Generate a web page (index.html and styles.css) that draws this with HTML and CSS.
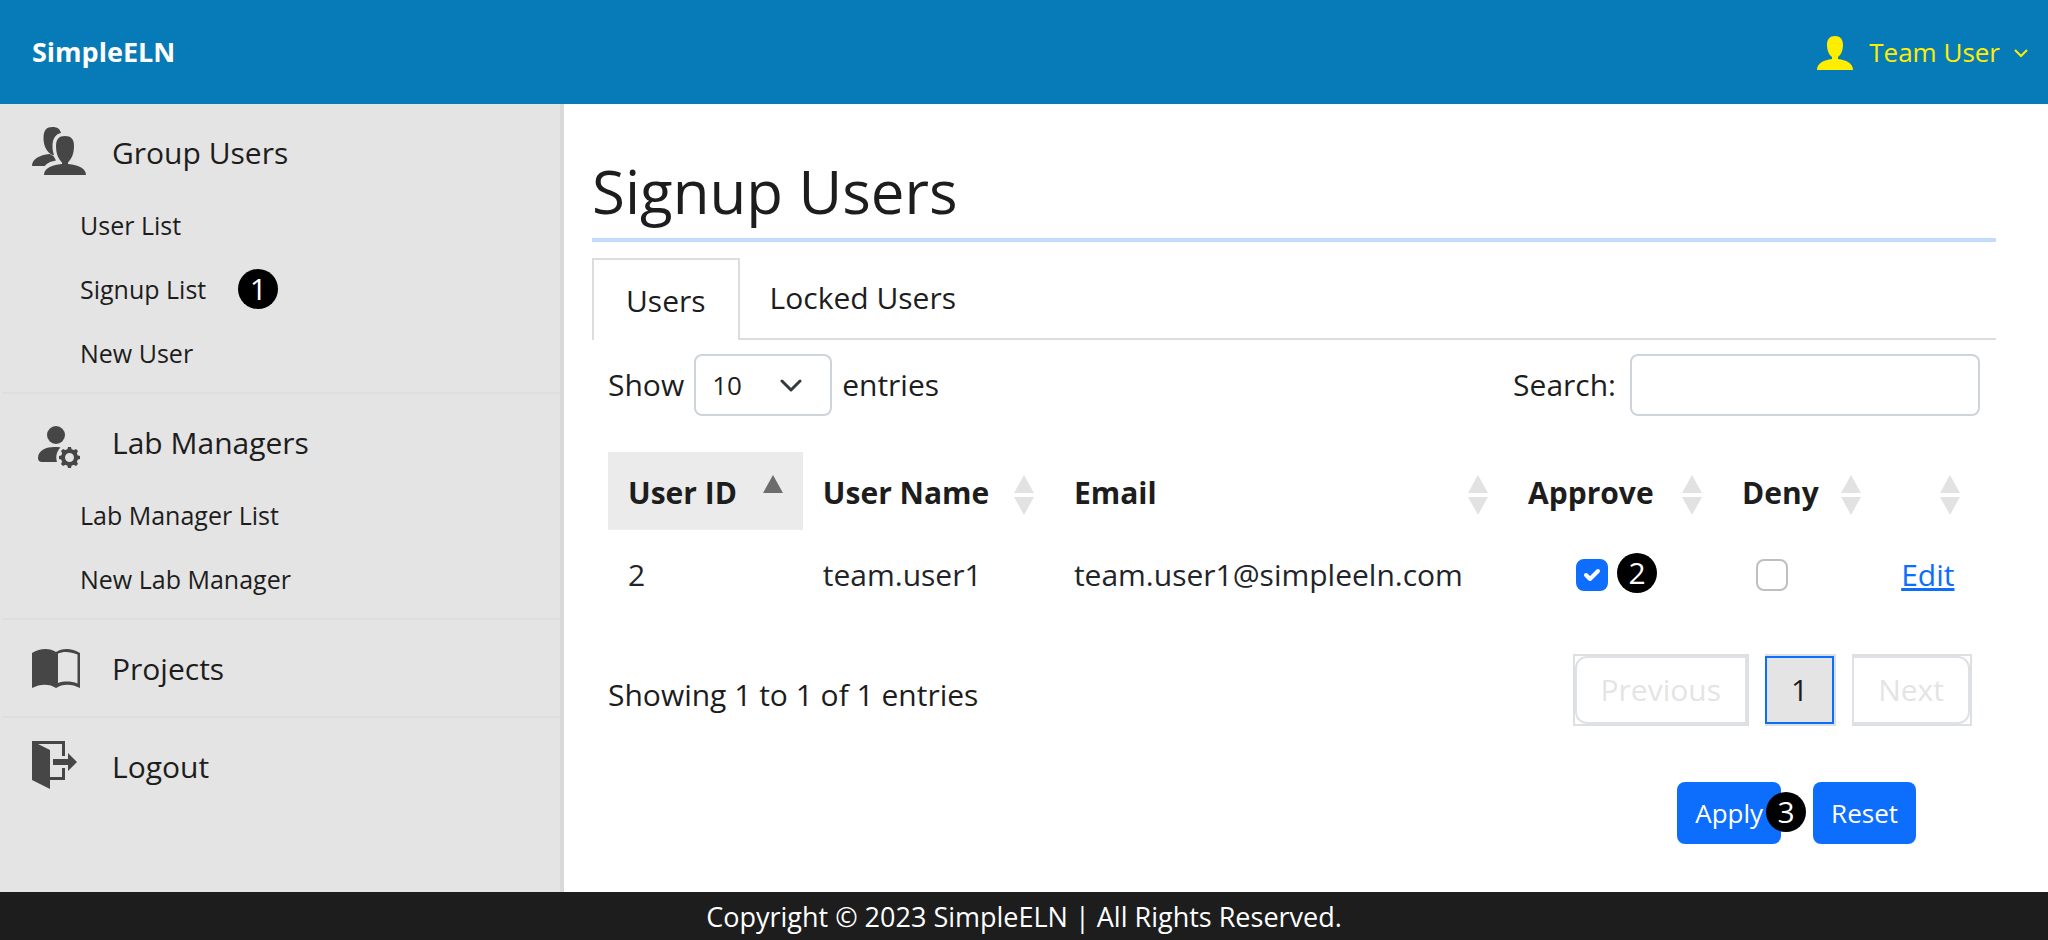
FILE: index.html
```html
<!DOCTYPE html>
<html lang="en">
<head>
<meta charset="utf-8">
<meta name="viewport" content="width=device-width, initial-scale=1">
<title>SimpleELN - Signup Users</title>
<link rel="stylesheet" href="styles.css">
</head>
<body class="page">
<header class="topbar">
  <a class="brand" href="#">SimpleELN</a>
  <button class="account" type="button">
    <svg class="account-avatar" viewBox="0 0 36 34" aria-hidden="true"><path d="M18 0c5 0 8 3 8 9 0 5-2 10-5 12v2c8 1 15 4 15 11H0c0-7 7-10 15-11v-2c-3-2-5-7-5-12 0-6 3-9 8-9z"/></svg>
    <span class="account-name">Team User</span>
    <svg class="account-caret" viewBox="0 0 14 10" aria-hidden="true"><path d="M1 2l6 6 6-6"/></svg>
  </button>
</header>
<div class="shell">
  <nav class="sidebar" aria-label="Main">
    <section class="nav-group">
      <a class="nav-head" href="#">
        <svg class="nav-icon" viewBox="0 0 56 56" aria-hidden="true"><path d="M20.500 2c5 0 7.500 2 8.500 6-5 1-8.500 5-8.500 13 0 4 .5 6 1.500 9-1 0-3-.5-4-1.500-4-3-6.500-8.500-6.500-15.500 0-8 3-11 9-11zM17.500 29l4 2 2.500 4.500C18 36.500 14.500 38.500 13 41H0c0-7 7.500-11 17.500-12z"/><path d="M33 11c6 0 9 3 9 10 0 8-2.500 13-6 16.500V39c11 1 18 4.500 18 11H12c0-6.500 7-10 18-11v-1.500c-3.500-3.500-6-8.500-6-16.500 0-7 3-10 9-10z"/></svg>
        <span>Group Users</span>
      </a>
      <ul class="nav-list">
        <li><a class="nav-link" href="#">User List</a></li>
        <li><a class="nav-link" href="#">Signup List</a><span class="step step-list">1</span></li>
        <li><a class="nav-link" href="#">New User</a></li>
      </ul>
    </section>
    <section class="nav-group">
      <a class="nav-head" href="#">
        <svg class="nav-icon" viewBox="0 0 56 56" aria-hidden="true"><circle cx="24" cy="20" r="9"/><path d="M10 47q-4 0-4-4c0-8 9-11 16-11 3 0 5 0 6.500.5-4 4-5 9-3.500 14.500z"/><circle class="gear-ring" cx="37.500" cy="42.500" r="6.500"/><path d="M36 32h3l1 4h-5zM36 53h3l1-4h-5zM27 41v3l4 1v-5zM48 41v3l-4 1v-5zM29 36l2-2 4 2-4 4zM46 36l-2-2-4 2 4 4zM29 49l2 2 4-2-4-4zM46 49l-2 2-4-2 4-4z"/></svg>
        <span>Lab Managers</span>
      </a>
      <ul class="nav-list">
        <li><a class="nav-link" href="#">Lab Manager List</a></li>
        <li><a class="nav-link" href="#">New Lab Manager</a></li>
      </ul>
    </section>
    <section class="nav-group">
      <a class="nav-head" href="#">
        <svg class="nav-icon" viewBox="0 0 56 56" aria-hidden="true"><path fill-rule="evenodd" d="M0 12c8-5 18-5 24-1 6-4 16-4 24 1v35c-8-4.500-18-4.500-24 0-6-4.500-16-4.500-24 0zM26 12.500v29.500c6-2 13-2 19.500.5v-29c-7-3-14-3.500-19.500-1z"/></svg>
        <span>Projects</span>
      </a>
    </section>
    <section class="nav-group">
      <a class="nav-head" href="#">
        <svg class="nav-icon" viewBox="0 0 56 56" aria-hidden="true"><path d="M0 2h33v15h-3V5H6l12 6v27h12v-9h3v12H18v9L0 41z"/><path d="M21 20h15v-6l9 9-9 9v-6H21z"/></svg>
        <span>Logout</span>
      </a>
    </section>
  </nav>
  <main class="content">
    <h1 class="title">Signup Users</h1>
    <div class="tabs" role="tablist">
      <button class="tab tab-active" type="button" role="tab" aria-selected="true">Users</button>
      <button class="tab" type="button" role="tab" aria-selected="false">Locked Users</button>
    </div>
    <div class="panel">
      <div class="toolbar">
        <label class="length">Show
          <span class="select-wrap">
            <select class="field select"><option>10</option><option>25</option><option>50</option></select>
            <svg class="select-caret" viewBox="0 0 22 14" aria-hidden="true"><path d="M2 2l9 9 9-9"/></svg>
          </span>
          entries</label>
        <label class="search">Search: <input class="field search-input" type="search"></label>
      </div>
      <table class="grid">
        <colgroup><col class="col-id"><col class="col-name"><col class="col-email"><col class="col-approve"><col class="col-deny"><col class="col-edit"></colgroup>
        <thead>
          <tr>
            <th class="sorted"><div class="th-in"><span>User ID</span><svg class="sort" viewBox="0 0 20 40" aria-hidden="true"><path d="M10 0l10 18H0z"/></svg></div></th>
            <th><div class="th-in"><span>User Name</span><svg class="sort" viewBox="0 0 20 40" aria-hidden="true"><path d="M10 0l10 18H0zM0 22h20L10 40z"/></svg></div></th>
            <th><div class="th-in"><span>Email</span><svg class="sort" viewBox="0 0 20 40" aria-hidden="true"><path d="M10 0l10 18H0zM0 22h20L10 40z"/></svg></div></th>
            <th><div class="th-in"><span>Approve</span><svg class="sort" viewBox="0 0 20 40" aria-hidden="true"><path d="M10 0l10 18H0zM0 22h20L10 40z"/></svg></div></th>
            <th><div class="th-in"><span>Deny</span><svg class="sort" viewBox="0 0 20 40" aria-hidden="true"><path d="M10 0l10 18H0zM0 22h20L10 40z"/></svg></div></th>
            <th><div class="th-in"><span></span><svg class="sort" viewBox="0 0 20 40" aria-hidden="true"><path d="M10 0l10 18H0zM0 22h20L10 40z"/></svg></div></th>
          </tr>
        </thead>
        <tbody>
          <tr>
            <td>2</td>
            <td>team.user1</td>
            <td>team.user1@simpleeln.com</td>
            <td class="cell-approve"><span class="check-wrap"><input class="check" type="checkbox" checked aria-label="Approve"><svg class="check-mark" viewBox="0 0 20 20" aria-hidden="true"><path d="M4 10l4 4 8-8"/></svg><span class="step step-approve">2</span></span></td>
            <td class="cell-deny"><span class="check-wrap"><input class="check" type="checkbox" aria-label="Deny"></span></td>
            <td><a class="edit" href="#">Edit</a></td>
          </tr>
        </tbody>
      </table>
      <div class="table-foot">
        <p class="info">Showing 1 to 1 of 1 entries</p>
        <div class="pager">
          <span class="page-item page-prev"><button class="page-btn" type="button" disabled>Previous</button></span>
          <span class="page-item page-current"><button class="page-btn" type="button">1</button></span>
          <span class="page-item page-next"><button class="page-btn" type="button" disabled>Next</button></span>
        </div>
      </div>
      <div class="actions">
        <span class="action-wrap"><button class="action" type="button">Apply</button><span class="step step-apply">3</span></span>
        <button class="action" type="button">Reset</button>
      </div>
    </div>
  </main>
</div>
<footer class="footer">Copyright © 2023 SimpleELN | All Rights Reserved.</footer>
</body>
</html>
```
FILE: styles.css
```css
* { box-sizing: border-box; }

.page {
  display: flex;
  flex-direction: column;
  min-height: 100vh;
  margin: 0;
  background: #fff;
  color: #1d1d1d;
  font-family: "Open Sans", "Noto Sans", sans-serif;
  font-size: 30px;
  line-height: 48px;
}

button, select, input { font: inherit; color: inherit; }
button { cursor: pointer; }
a { color: inherit; text-decoration: none; }

/* Top bar */
.topbar {
  display: flex;
  align-items: center;
  justify-content: space-between;
  height: 104px;
  padding: 0 20px 0 32px;
  background: #077bb8;
  font-size: 26px;
}
.brand { color: #fff; font-size: 27px; font-weight: 700; }
.account {
  display: flex;
  align-items: center;
  padding: 0;
  border: 0;
  background: none;
  color: #ffee00;
}
.account-avatar { width: 36px; height: 34px; margin: 2px 16px 0 0; fill: currentColor; }
.account-caret { width: 14px; height: 10px; margin: 2px 0 0 14px; fill: none; stroke: currentColor; stroke-width: 2; }

.shell { display: flex; flex: 1; }

/* Sidebar */
.sidebar {
  flex: none;
  width: 564px;
  border-right: 4px solid #d9d9d9;
  background: #e4e4e4;
}
.nav-group {
  margin-left: 2px;
  padding: 9px 0 7px 30px;
  border-bottom: 2px solid #dedede;
}
.nav-group:last-child { border-bottom: 0; }
.nav-head { display: flex; align-items: center; gap: 24px; height: 80px; }
.nav-icon { width: 56px; height: 56px; fill: #464646; overflow: visible; }
.gear-ring { fill: none; stroke: #464646; stroke-width: 4; }
.nav-list { margin: 0; padding: 0 0 0 48px; list-style: none; font-size: 25px; line-height: 64px; }
.nav-list li { display: flex; align-items: center; height: 64px; }

/* Numbered step markers */
.step {
  width: 40px;
  height: 40px;
  border-radius: 50%;
  background: #000;
  color: #fff;
  font-size: 30px;
  line-height: 40px;
  text-align: center;
}
.step-list { margin-left: 32px; }
.step-approve { position: absolute; top: -6px; left: 41px; }
.step-apply { position: absolute; top: 10px; right: -25px; }

/* Content */
.content { flex: 1; min-width: 0; padding: 48px 52px 48px 28px; }
.title {
  margin: 0 0 16px;
  border-bottom: 4px solid #c2dbff;
  font-size: 60px;
  font-weight: 400;
  line-height: 78px;
  padding-bottom: 8px;
}
.tabs { display: flex; border-bottom: 2px solid #dddddd; }
.tab {
  height: 80px;
  padding: 0 30px;
  border: 0;
  background: none;
}
.tab-active {
  height: 82px;
  margin-bottom: -2px;
  padding: 2px 32px 0;
  border: 2px solid #dddddd;
  border-bottom: 0;
  background: #fff;
}
.panel { padding: 14px 16px 0; }
.toolbar { display: flex; justify-content: space-between; }
.length, .search { display: flex; align-items: center; }
.length { gap: 10px; }
.search { gap: 14px; }
.field {
  height: 62px;
  border: 2px solid #ced4da;
  border-radius: 8px;
  background: #fff;
}
.select-wrap { position: relative; display: flex; }
.select { width: 138px; padding: 0 16px; appearance: none; font-size: 26px; }
.select-caret {
  position: absolute;
  top: 25px;
  right: 30px;
  width: 22px;
  height: 14px;
  fill: none;
  stroke: #343a40;
  stroke-width: 3;
  stroke-linecap: round;
  stroke-linejoin: round;
  pointer-events: none;
}
.search-input { width: 350px; padding: 0 16px; }

/* Table */
.grid { width: 100%; margin-top: 36px; border-collapse: collapse; table-layout: fixed; }
.col-id { width: 14.2%; }
.col-name { width: 18.3%; }
.col-email { width: 33.1%; }
.col-approve { width: 15.6%; }
.col-deny { width: 11.6%; }
.col-edit { width: 7.2%; }
.grid th, .grid td { padding: 0 20px; text-align: left; white-space: nowrap; }
.grid th { height: 78px; padding-top: 4px; font-weight: 700; }
.grid td { height: 90px; color: #212529; }
.th-in { display: flex; align-items: center; justify-content: space-between; }
.sort { width: 20px; height: 40px; margin-top: 4px; fill: #e2e2e2; }
.sorted { background: #ebebeb; }
.sorted .sort { fill: #6c6c6c; }
.grid .cell-approve { padding-left: 68px; }
.grid .cell-deny { padding-left: 34px; }
.check-wrap { position: relative; display: block; width: 32px; height: 32px; }
.check {
  display: block;
  width: 32px;
  height: 32px;
  margin: 0;
  border: 2px solid #bfbfbf;
  border-radius: 8px;
  background: #fff;
  appearance: none;
}
.check:checked { border-color: #0d6efd; background: #0d6efd; }
.check-mark {
  position: absolute;
  top: 6px;
  left: 6px;
  width: 20px;
  height: 20px;
  fill: none;
  stroke: #fff;
  stroke-width: 4;
  stroke-linecap: round;
  stroke-linejoin: round;
  pointer-events: none;
}
.edit { color: #0d6efd; text-decoration: underline; }

/* Table footer */
.table-foot { display: flex; align-items: center; justify-content: space-between; margin-top: 34px; }
.info { margin: 0; padding-top: 10px; }
.pager { display: flex; gap: 16px; margin-right: 8px; }
.page-item { border: 2px solid #dddfe0; }
.page-btn {
  display: block;
  height: 68px;
  padding: 0 24px;
  border: 2px solid #dee2e6;
  background: #fff;
}
.page-btn:disabled { color: #e4e4e4; }
.page-prev .page-btn { border-radius: 12px 0 0 12px; }
.page-next .page-btn { border-radius: 0 12px 12px 0; }
.page-current { border-left: 0; }
.page-next { border-left: 0; }
.page-current .page-btn { border-color: #0d6efd; background: #e4e4e4; color: #1d1d1d; }

/* Actions */
.actions { display: flex; justify-content: flex-end; gap: 32px; margin: 56px 64px 0 0; }
.action-wrap { position: relative; display: flex; }
.action {
  height: 62px;
  padding: 0 18px;
  border: 0;
  border-radius: 8px;
  background: #0d6efd;
  color: #fff;
  font-size: 26px;
}

.footer {
  padding: 2px 0 0;
  background: #1d1d1d;
  color: #fff;
  font-size: 27px;
  line-height: 46px;
  text-align: center;
}
```
